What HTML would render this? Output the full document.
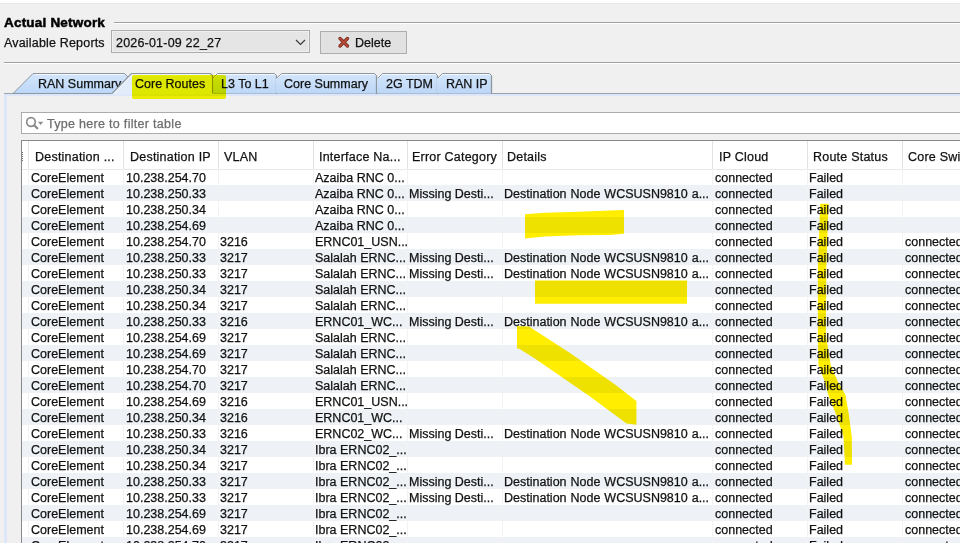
<!DOCTYPE html><html><head><meta charset="utf-8"><style>
*{margin:0;padding:0;box-sizing:border-box}
html,body{width:960px;height:543px;overflow:hidden;background:#f0f0f0}
body{position:relative;font-family:"Liberation Sans",sans-serif;font-size:12.5px;color:#111}
.a{position:absolute}
.t{position:absolute;white-space:pre;line-height:16px;height:16px;-webkit-text-stroke:0.25px currentColor}
.hl{position:absolute;background:#f0e400;mix-blend-mode:multiply}
</style></head><body><div class="a" style="left:0;top:0;width:960px;height:3px;background:#fff"></div>
<div class="a" style="left:0;top:3px;width:960px;height:1px;background:#e9e9e9"></div>
<div class="t" style="left:4px;top:15px;font-weight:bold;font-size:13.5px;letter-spacing:0.2px;-webkit-text-stroke:0.5px #000;color:#000">Actual Network</div>
<div class="a" style="left:114px;top:22px;width:846px;height:1px;background:#a0a0a0"></div>
<div class="a" style="left:114px;top:23px;width:846px;height:1px;background:#fff"></div>
<div class="t" style="left:4px;top:35px;letter-spacing:0.18px">Available Reports</div>
<div class="a" style="left:111px;top:30px;width:199px;height:23px;border:1px solid #adadad;background:#e5e5e5;box-shadow:inset 0 0 0 1px #f0f0f0"></div>
<div class="t" style="left:116px;top:35px;letter-spacing:0.2px">2026-01-09 22_27</div>
<svg class="a" style="left:294px;top:38px" width="14" height="9" viewBox="0 0 14 9"><path d="M2 2 L6.5 6.5 L11 2" fill="none" stroke="#3a3a3a" stroke-width="1.2"/></svg>
<div class="a" style="left:320px;top:31px;width:87px;height:23px;border:1px solid #adadad;background:#e1e1e1"></div>
<svg class="a" style="left:336.5px;top:35.5px" width="14" height="13" viewBox="0 0 14 13"><path d="M3 2.5 L10.5 10 M10.5 2.5 L3 10" stroke="#7e3224" stroke-width="3.4" stroke-linecap="round"/><path d="M3 2.5 L10.5 10 M10.5 2.5 L3 10" stroke="#bb4c36" stroke-width="1.6" stroke-linecap="round"/></svg>
<div class="t" style="left:355px;top:35px">Delete</div>
<div class="a" style="left:4px;top:62px;width:956px;height:1px;background:#a0a0a0"></div>
<div class="a" style="left:4px;top:63px;width:956px;height:1px;background:#fff"></div>
<div class="a" style="left:4px;top:93px;width:108px;height:1px;background:#98a3ab"></div>
<div class="a" style="left:212px;top:93px;width:748px;height:1px;background:#98a3ab"></div>
<div class="a" style="left:4px;top:94px;width:956px;height:2px;background:#dde7f9"></div>
<div class="a" style="left:4px;top:94px;width:3px;height:449px;background:#dde7f9"></div>
<svg class="a" style="left:0;top:0" width="960" height="100"><defs><linearGradient id="tg" gradientUnits="userSpaceOnUse" x1="0" y1="74" x2="0" y2="93"><stop offset="0" stop-color="#d3e5fb"/><stop offset="1" stop-color="#bcd7f7"/></linearGradient></defs><path d="M13 93.5 L33 73.5 L124.5 73.5 L128.5 77.5 L128.5 93.5 Z" fill="url(#tg)" stroke="#8e979f" stroke-width="1"/><path d="M35 74.5 L123.5 74.5" stroke="#f4f8fe" stroke-width="1"/><path d="M212.5 93.5 L212.5 78.5 L217.5 73.5 L274.5 73.5 L276.5 75.5 L276.5 93.5" fill="url(#tg)" stroke="#8e979f" stroke-width="1"/><path d="M212.5 93 L212.5 78.5" stroke="url(#tg)" stroke-width="1"/><path d="M213.5 78.5 L217.5 74.5 L274.5 74.5" fill="none" stroke="#f4f8fe" stroke-width="1"/><path d="M276.5 75.5 L276.5 93.5" stroke="#8e979f" stroke-width="1.3"/><path d="M276.5 93.5 L276.5 78.5 L281.5 73.5 L374.5 73.5 L376.5 75.5 L376.5 93.5" fill="url(#tg)" stroke="#8e979f" stroke-width="1"/><path d="M276.5 93 L276.5 78.5" stroke="url(#tg)" stroke-width="1"/><path d="M277.5 78.5 L281.5 74.5 L374.5 74.5" fill="none" stroke="#f4f8fe" stroke-width="1"/><path d="M376.5 75.5 L376.5 93.5" stroke="#8e979f" stroke-width="1.3"/><path d="M377.5 93.5 L377.5 78.5 L382.5 73.5 L435.5 73.5 L437.5 75.5 L437.5 93.5" fill="url(#tg)" stroke="#8e979f" stroke-width="1"/><path d="M377.5 93 L377.5 78.5" stroke="url(#tg)" stroke-width="1"/><path d="M378.5 78.5 L382.5 74.5 L435.5 74.5" fill="none" stroke="#f4f8fe" stroke-width="1"/><path d="M437.5 75.5 L437.5 93.5" stroke="#8e979f" stroke-width="1.3"/><path d="M437.5 93.5 L437.5 78.5 L442.5 73.5 L489.5 73.5 L491.5 75.5 L491.5 93.5" fill="url(#tg)" stroke="#8e979f" stroke-width="1"/><path d="M437.5 93 L437.5 78.5" stroke="url(#tg)" stroke-width="1"/><path d="M438.5 78.5 L442.5 74.5 L489.5 74.5" fill="none" stroke="#f4f8fe" stroke-width="1"/><path d="M491.5 75.5 L491.5 93.5" stroke="#8e979f" stroke-width="1.3"/></svg>
<div class="t" style="left:38px;top:76px">RAN Summary</div>
<div class="t" style="left:221px;top:76px">L3 To L1</div>
<div class="t" style="left:284px;top:76px">Core Summary</div>
<div class="t" style="left:386px;top:76px">2G TDM</div>
<div class="t" style="left:446px;top:76px">RAN IP</div>
<svg class="a" style="left:0;top:0" width="960" height="100"><path d="M111 94.5 L128.5 76.5 L131.5 73.5 L210.5 73.5 L212.5 75.5 L212.5 94.5 Z" fill="#e2ecfa" stroke="none"/><path d="M112 93.5 L128.5 76.5 L131.5 73.5 L210.5 73.5 L212.5 75.5 L212.5 93" fill="none" stroke="#8e979f" stroke-width="1.1"/><path d="M114 93.5 L129.5 77.5 L132 75 L210 75" fill="none" stroke="#f6f9fe" stroke-width="1"/></svg>
<div class="t" style="left:135px;top:76px">Core Routes</div>
<div class="a" style="left:21px;top:112px;width:939px;height:22px;border:1px solid #ababab;border-right:none;background:#fff"></div>
<svg class="a" style="left:22px;top:113px" width="24" height="20" viewBox="0 0 24 20"><circle cx="9" cy="9" r="4.3" fill="none" stroke="#8a8a8a" stroke-width="1.7"/><path d="M12.2 12.2 L15.3 15.3" stroke="#8a8a8a" stroke-width="2.2" stroke-linecap="round"/><path d="M16 8.7 L21.2 8.7 L18.6 12 Z" fill="#8a8a8a"/></svg>
<div class="t" style="left:47px;top:116px;color:#6d6d6d;letter-spacing:0.3px">Type here to filter table</div>
<div class="a" style="left:21px;top:140px;width:939px;height:403px;border-left:1px solid #888;border-top:1px solid #888;background:#fff"></div>
<div class="a" style="left:22px;top:169px;width:938px;height:16px;background:#fff"></div>
<div class="a" style="left:22px;top:185px;width:938px;height:16px;background:#eef2f7"></div>
<div class="a" style="left:22px;top:201px;width:938px;height:16px;background:#fff"></div>
<div class="a" style="left:22px;top:217px;width:938px;height:16px;background:#eef2f7"></div>
<div class="a" style="left:22px;top:233px;width:938px;height:16px;background:#fff"></div>
<div class="a" style="left:22px;top:249px;width:938px;height:16px;background:#eef2f7"></div>
<div class="a" style="left:22px;top:265px;width:938px;height:16px;background:#fff"></div>
<div class="a" style="left:22px;top:281px;width:938px;height:16px;background:#eef2f7"></div>
<div class="a" style="left:22px;top:297px;width:938px;height:16px;background:#fff"></div>
<div class="a" style="left:22px;top:313px;width:938px;height:16px;background:#eef2f7"></div>
<div class="a" style="left:22px;top:329px;width:938px;height:16px;background:#fff"></div>
<div class="a" style="left:22px;top:345px;width:938px;height:16px;background:#eef2f7"></div>
<div class="a" style="left:22px;top:361px;width:938px;height:16px;background:#fff"></div>
<div class="a" style="left:22px;top:377px;width:938px;height:16px;background:#eef2f7"></div>
<div class="a" style="left:22px;top:393px;width:938px;height:16px;background:#fff"></div>
<div class="a" style="left:22px;top:409px;width:938px;height:16px;background:#eef2f7"></div>
<div class="a" style="left:22px;top:425px;width:938px;height:16px;background:#fff"></div>
<div class="a" style="left:22px;top:441px;width:938px;height:16px;background:#eef2f7"></div>
<div class="a" style="left:22px;top:457px;width:938px;height:16px;background:#fff"></div>
<div class="a" style="left:22px;top:473px;width:938px;height:16px;background:#eef2f7"></div>
<div class="a" style="left:22px;top:489px;width:938px;height:16px;background:#fff"></div>
<div class="a" style="left:22px;top:505px;width:938px;height:16px;background:#eef2f7"></div>
<div class="a" style="left:22px;top:521px;width:938px;height:16px;background:#fff"></div>
<div class="a" style="left:22px;top:537px;width:938px;height:16px;background:#eef2f7"></div>
<div class="a" style="left:22px;top:141px;width:938px;height:28px;background:#fff"></div>
<div class="a" style="left:22px;top:169px;width:938px;height:1px;background:#e8e8e8"></div>
<div class="a" style="left:28px;top:141px;width:1px;height:28px;background:#e3e3e3"></div>
<div class="a" style="left:28px;top:169px;width:1px;height:374px;background:#f2f2f2"></div>
<div class="a" style="left:123px;top:141px;width:1px;height:28px;background:#e3e3e3"></div>
<div class="a" style="left:123px;top:169px;width:1px;height:374px;background:#f2f2f2"></div>
<div class="a" style="left:218px;top:141px;width:1px;height:28px;background:#e3e3e3"></div>
<div class="a" style="left:218px;top:169px;width:1px;height:374px;background:#f2f2f2"></div>
<div class="a" style="left:313px;top:141px;width:1px;height:28px;background:#e3e3e3"></div>
<div class="a" style="left:313px;top:169px;width:1px;height:374px;background:#f2f2f2"></div>
<div class="a" style="left:407px;top:141px;width:1px;height:28px;background:#e3e3e3"></div>
<div class="a" style="left:407px;top:169px;width:1px;height:374px;background:#f2f2f2"></div>
<div class="a" style="left:502px;top:141px;width:1px;height:28px;background:#e3e3e3"></div>
<div class="a" style="left:502px;top:169px;width:1px;height:374px;background:#f2f2f2"></div>
<div class="a" style="left:712px;top:141px;width:1px;height:28px;background:#e3e3e3"></div>
<div class="a" style="left:712px;top:169px;width:1px;height:374px;background:#f2f2f2"></div>
<div class="a" style="left:807px;top:141px;width:1px;height:28px;background:#e3e3e3"></div>
<div class="a" style="left:807px;top:169px;width:1px;height:374px;background:#f2f2f2"></div>
<div class="a" style="left:902px;top:141px;width:1px;height:28px;background:#e3e3e3"></div>
<div class="a" style="left:902px;top:169px;width:1px;height:374px;background:#f2f2f2"></div>
<div class="a" style="left:22px;top:152px;width:2px;height:9px;border-left:1px dotted #777"></div>
<div class="t" style="left:35px;top:149px;letter-spacing:0.22px">Destination ...</div>
<div class="t" style="left:130px;top:149px;letter-spacing:0.22px">Destination IP</div>
<div class="t" style="left:224px;top:149px;letter-spacing:0.22px">VLAN</div>
<div class="t" style="left:319px;top:149px;letter-spacing:0.22px">Interface Na...</div>
<div class="t" style="left:412px;top:149px;letter-spacing:0.22px">Error Category</div>
<div class="t" style="left:507px;top:149px;letter-spacing:0.22px">Details</div>
<div class="t" style="left:719px;top:149px;letter-spacing:0.22px">IP Cloud</div>
<div class="t" style="left:813px;top:149px;letter-spacing:0.22px">Route Status</div>
<div class="t" style="left:908px;top:149px;letter-spacing:0.22px">Core Swi</div>
<div class="t" style="left:31px;top:170px">CoreElement</div>
<div class="t" style="left:126px;top:170px">10.238.254.70</div>
<div class="t" style="left:315px;top:170px">Azaiba RNC 0...</div>
<div class="t" style="left:715px;top:170px">connected</div>
<div class="t" style="left:809px;top:170px">Failed</div>
<div class="t" style="left:31px;top:186px">CoreElement</div>
<div class="t" style="left:126px;top:186px">10.238.250.33</div>
<div class="t" style="left:315px;top:186px">Azaiba RNC 0...</div>
<div class="t" style="left:409px;top:186px">Missing Desti...</div>
<div class="t" style="left:504px;top:186px;word-spacing:0.5px">Destination Node WCSUSN9810 a...</div>
<div class="t" style="left:715px;top:186px">connected</div>
<div class="t" style="left:809px;top:186px">Failed</div>
<div class="t" style="left:31px;top:202px">CoreElement</div>
<div class="t" style="left:126px;top:202px">10.238.250.34</div>
<div class="t" style="left:315px;top:202px">Azaiba RNC 0...</div>
<div class="t" style="left:715px;top:202px">connected</div>
<div class="t" style="left:809px;top:202px">Failed</div>
<div class="t" style="left:31px;top:218px">CoreElement</div>
<div class="t" style="left:126px;top:218px">10.238.254.69</div>
<div class="t" style="left:315px;top:218px">Azaiba RNC 0...</div>
<div class="t" style="left:715px;top:218px">connected</div>
<div class="t" style="left:809px;top:218px">Failed</div>
<div class="t" style="left:31px;top:234px">CoreElement</div>
<div class="t" style="left:126px;top:234px">10.238.254.70</div>
<div class="t" style="left:220px;top:234px">3216</div>
<div class="t" style="left:315px;top:234px">ERNC01_USN...</div>
<div class="t" style="left:715px;top:234px">connected</div>
<div class="t" style="left:809px;top:234px">Failed</div>
<div class="t" style="left:905px;top:234px">connected</div>
<div class="t" style="left:31px;top:250px">CoreElement</div>
<div class="t" style="left:126px;top:250px">10.238.250.33</div>
<div class="t" style="left:220px;top:250px">3217</div>
<div class="t" style="left:315px;top:250px">Salalah ERNC...</div>
<div class="t" style="left:409px;top:250px">Missing Desti...</div>
<div class="t" style="left:504px;top:250px;word-spacing:0.5px">Destination Node WCSUSN9810 a...</div>
<div class="t" style="left:715px;top:250px">connected</div>
<div class="t" style="left:809px;top:250px">Failed</div>
<div class="t" style="left:905px;top:250px">connected</div>
<div class="t" style="left:31px;top:266px">CoreElement</div>
<div class="t" style="left:126px;top:266px">10.238.250.33</div>
<div class="t" style="left:220px;top:266px">3217</div>
<div class="t" style="left:315px;top:266px">Salalah ERNC...</div>
<div class="t" style="left:409px;top:266px">Missing Desti...</div>
<div class="t" style="left:504px;top:266px;word-spacing:0.5px">Destination Node WCSUSN9810 a...</div>
<div class="t" style="left:715px;top:266px">connected</div>
<div class="t" style="left:809px;top:266px">Failed</div>
<div class="t" style="left:905px;top:266px">connected</div>
<div class="t" style="left:31px;top:282px">CoreElement</div>
<div class="t" style="left:126px;top:282px">10.238.250.34</div>
<div class="t" style="left:220px;top:282px">3217</div>
<div class="t" style="left:315px;top:282px">Salalah ERNC...</div>
<div class="t" style="left:715px;top:282px">connected</div>
<div class="t" style="left:809px;top:282px">Failed</div>
<div class="t" style="left:905px;top:282px">connected</div>
<div class="t" style="left:31px;top:298px">CoreElement</div>
<div class="t" style="left:126px;top:298px">10.238.250.34</div>
<div class="t" style="left:220px;top:298px">3217</div>
<div class="t" style="left:315px;top:298px">Salalah ERNC...</div>
<div class="t" style="left:715px;top:298px">connected</div>
<div class="t" style="left:809px;top:298px">Failed</div>
<div class="t" style="left:905px;top:298px">connected</div>
<div class="t" style="left:31px;top:314px">CoreElement</div>
<div class="t" style="left:126px;top:314px">10.238.250.33</div>
<div class="t" style="left:220px;top:314px">3216</div>
<div class="t" style="left:315px;top:314px">ERNC01_WC...</div>
<div class="t" style="left:409px;top:314px">Missing Desti...</div>
<div class="t" style="left:504px;top:314px;word-spacing:0.5px">Destination Node WCSUSN9810 a...</div>
<div class="t" style="left:715px;top:314px">connected</div>
<div class="t" style="left:809px;top:314px">Failed</div>
<div class="t" style="left:905px;top:314px">connected</div>
<div class="t" style="left:31px;top:330px">CoreElement</div>
<div class="t" style="left:126px;top:330px">10.238.254.69</div>
<div class="t" style="left:220px;top:330px">3217</div>
<div class="t" style="left:315px;top:330px">Salalah ERNC...</div>
<div class="t" style="left:715px;top:330px">connected</div>
<div class="t" style="left:809px;top:330px">Failed</div>
<div class="t" style="left:905px;top:330px">connected</div>
<div class="t" style="left:31px;top:346px">CoreElement</div>
<div class="t" style="left:126px;top:346px">10.238.254.69</div>
<div class="t" style="left:220px;top:346px">3217</div>
<div class="t" style="left:315px;top:346px">Salalah ERNC...</div>
<div class="t" style="left:715px;top:346px">connected</div>
<div class="t" style="left:809px;top:346px">Failed</div>
<div class="t" style="left:905px;top:346px">connected</div>
<div class="t" style="left:31px;top:362px">CoreElement</div>
<div class="t" style="left:126px;top:362px">10.238.254.70</div>
<div class="t" style="left:220px;top:362px">3217</div>
<div class="t" style="left:315px;top:362px">Salalah ERNC...</div>
<div class="t" style="left:715px;top:362px">connected</div>
<div class="t" style="left:809px;top:362px">Failed</div>
<div class="t" style="left:905px;top:362px">connected</div>
<div class="t" style="left:31px;top:378px">CoreElement</div>
<div class="t" style="left:126px;top:378px">10.238.254.70</div>
<div class="t" style="left:220px;top:378px">3217</div>
<div class="t" style="left:315px;top:378px">Salalah ERNC...</div>
<div class="t" style="left:715px;top:378px">connected</div>
<div class="t" style="left:809px;top:378px">Failed</div>
<div class="t" style="left:905px;top:378px">connected</div>
<div class="t" style="left:31px;top:394px">CoreElement</div>
<div class="t" style="left:126px;top:394px">10.238.254.69</div>
<div class="t" style="left:220px;top:394px">3216</div>
<div class="t" style="left:315px;top:394px">ERNC01_USN...</div>
<div class="t" style="left:715px;top:394px">connected</div>
<div class="t" style="left:809px;top:394px">Failed</div>
<div class="t" style="left:905px;top:394px">connected</div>
<div class="t" style="left:31px;top:410px">CoreElement</div>
<div class="t" style="left:126px;top:410px">10.238.250.34</div>
<div class="t" style="left:220px;top:410px">3216</div>
<div class="t" style="left:315px;top:410px">ERNC01_WC...</div>
<div class="t" style="left:715px;top:410px">connected</div>
<div class="t" style="left:809px;top:410px">Failed</div>
<div class="t" style="left:905px;top:410px">connected</div>
<div class="t" style="left:31px;top:426px">CoreElement</div>
<div class="t" style="left:126px;top:426px">10.238.250.33</div>
<div class="t" style="left:220px;top:426px">3216</div>
<div class="t" style="left:315px;top:426px">ERNC02_WC...</div>
<div class="t" style="left:409px;top:426px">Missing Desti...</div>
<div class="t" style="left:504px;top:426px;word-spacing:0.5px">Destination Node WCSUSN9810 a...</div>
<div class="t" style="left:715px;top:426px">connected</div>
<div class="t" style="left:809px;top:426px">Failed</div>
<div class="t" style="left:905px;top:426px">connected</div>
<div class="t" style="left:31px;top:442px">CoreElement</div>
<div class="t" style="left:126px;top:442px">10.238.250.34</div>
<div class="t" style="left:220px;top:442px">3217</div>
<div class="t" style="left:315px;top:442px">Ibra ERNC02_...</div>
<div class="t" style="left:715px;top:442px">connected</div>
<div class="t" style="left:809px;top:442px">Failed</div>
<div class="t" style="left:905px;top:442px">connected</div>
<div class="t" style="left:31px;top:458px">CoreElement</div>
<div class="t" style="left:126px;top:458px">10.238.250.34</div>
<div class="t" style="left:220px;top:458px">3217</div>
<div class="t" style="left:315px;top:458px">Ibra ERNC02_...</div>
<div class="t" style="left:715px;top:458px">connected</div>
<div class="t" style="left:809px;top:458px">Failed</div>
<div class="t" style="left:905px;top:458px">connected</div>
<div class="t" style="left:31px;top:474px">CoreElement</div>
<div class="t" style="left:126px;top:474px">10.238.250.33</div>
<div class="t" style="left:220px;top:474px">3217</div>
<div class="t" style="left:315px;top:474px">Ibra ERNC02_...</div>
<div class="t" style="left:409px;top:474px">Missing Desti...</div>
<div class="t" style="left:504px;top:474px;word-spacing:0.5px">Destination Node WCSUSN9810 a...</div>
<div class="t" style="left:715px;top:474px">connected</div>
<div class="t" style="left:809px;top:474px">Failed</div>
<div class="t" style="left:905px;top:474px">connected</div>
<div class="t" style="left:31px;top:490px">CoreElement</div>
<div class="t" style="left:126px;top:490px">10.238.250.33</div>
<div class="t" style="left:220px;top:490px">3217</div>
<div class="t" style="left:315px;top:490px">Ibra ERNC02_...</div>
<div class="t" style="left:409px;top:490px">Missing Desti...</div>
<div class="t" style="left:504px;top:490px;word-spacing:0.5px">Destination Node WCSUSN9810 a...</div>
<div class="t" style="left:715px;top:490px">connected</div>
<div class="t" style="left:809px;top:490px">Failed</div>
<div class="t" style="left:905px;top:490px">connected</div>
<div class="t" style="left:31px;top:506px">CoreElement</div>
<div class="t" style="left:126px;top:506px">10.238.254.69</div>
<div class="t" style="left:220px;top:506px">3217</div>
<div class="t" style="left:315px;top:506px">Ibra ERNC02_...</div>
<div class="t" style="left:715px;top:506px">connected</div>
<div class="t" style="left:809px;top:506px">Failed</div>
<div class="t" style="left:905px;top:506px">connected</div>
<div class="t" style="left:31px;top:522px">CoreElement</div>
<div class="t" style="left:126px;top:522px">10.238.254.69</div>
<div class="t" style="left:220px;top:522px">3217</div>
<div class="t" style="left:315px;top:522px">Ibra ERNC02_...</div>
<div class="t" style="left:715px;top:522px">connected</div>
<div class="t" style="left:809px;top:522px">Failed</div>
<div class="t" style="left:905px;top:522px">connected</div>
<div class="t" style="left:31px;top:538px">CoreElement</div>
<div class="t" style="left:126px;top:538px">10.238.254.70</div>
<div class="t" style="left:220px;top:538px">3217</div>
<div class="t" style="left:315px;top:538px">Ibra ERNC02_...</div>
<div class="t" style="left:715px;top:538px">connected</div>
<div class="t" style="left:809px;top:538px">Failed</div>
<div class="t" style="left:905px;top:538px">connected</div>
<svg class="a" style="left:0;top:0;mix-blend-mode:multiply" width="960" height="543"><g fill="#ffee00"><rect x="132" y="75" width="94" height="24" rx="2" fill="#fafa00"/><polygon points="525,214.3 545,212.8 578,211.7 610,210.6 624,209.9 624,233.8 610,235 578,235.2 545,236.4 525,238.6"/><polygon points="535,280.5 687,280.5 687,303.7 535,303.7"/><polygon points="517,326 529,326.5 570,353 615.7,385 636.4,401 636.4,424.8 626.5,423.5 590,396.6 534,358 519.6,349 517,348.2"/><polygon points="820.2,203.8 828.5,203.8 826.3,268 825.9,335 830.6,364.8 837.7,381.5 845.5,395 849,415.7 851.8,436.4 852,464.7 844.9,464.7 843.5,436.4 836.6,415.7 828.3,395 824.8,381.5 818.4,364.8 817.9,335 817.9,268"/></g></svg></body></html>
